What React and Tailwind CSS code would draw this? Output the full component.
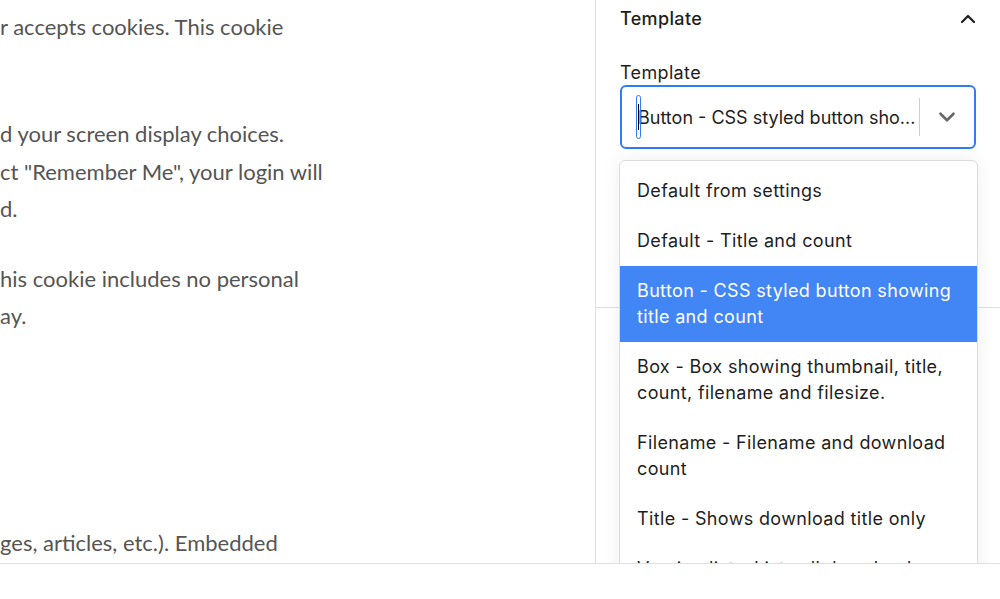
import { ChevronUp, ChevronDown } from "lucide-react";

const paragraphs = [
  { mt: "mt-0", lines: ["r accepts cookies. This cookie", ""] },
  {
    mt: "mt-[32px]",
    lines: ["d your screen display choices.", "ct \"Remember Me\", your login will", "d."],
  },
  { mt: "mt-[32px]", lines: ["his cookie includes no personal", "ay."] },
  { mt: "mt-[39px]", lines: ["", "", "", "", "ges, articles, etc.). Embedded"] },
];

const options = [
  "Default from settings",
  "Default - Title and count",
  "Button - CSS styled button showing title and count",
  "Box - Box showing thumbnail, title, count, filename and filesize.",
  "Filename - Filename and download count",
  "Title - Shows download title only",
  "Version list - Lists all downloads",
];

export default function App() {
  const active = 2;

  return (
    <div className="h-[599px] w-[1000px] flex flex-col bg-white overflow-hidden">
      <div className="h-[563px] flex">
        <div
          className="flex-1 pt-[8px] text-[22px] leading-[37.5px] text-[#555] overflow-hidden"
          style={{ fontFamily: "Lato, 'Open Sans', sans-serif" }}
        >
          {paragraphs.map((p, i) => (
            <div key={i} className={p.mt}>
              {p.lines.map((l, j) => (
                <div key={j} className="h-[37.5px] whitespace-nowrap">
                  {l}
                </div>
              ))}
            </div>
          ))}
        </div>

        <aside
          className="relative w-[405px] border-l border-[#e0e0e0] text-[#1e1e1e] tracking-[0.35px]"
          style={{ fontFamily: "Inter, 'Noto Sans', sans-serif" }}
        >
          <div className="h-[308px] border-b border-[#e0e0e0] px-[24px]">
            <div className="h-[37px] flex items-center justify-between">
              <span className="text-[18px] font-medium">Template</span>
              <ChevronUp className="w-[24px] h-[24px] -mr-[4px]" strokeWidth={2.2} />
            </div>
            <div className="mt-[25px] text-[18px] leading-[22px]">Template</div>
            <div className="mt-[1px] h-[64px] flex items-center border-2 border-[#2f7cf6] rounded-[6px]">
              <div className="flex-1 flex items-center pl-[14px] pr-[2px] min-w-0">
                <span className="relative w-[5px] h-[44px] rounded-full border border-[#2f7cf6] shrink-0">
                  <span className="absolute left-[1px] top-[8px] w-[1px] h-[26px] bg-black" />
                </span>
                <span className="text-[18px] tracking-normal -ml-[3px] whitespace-nowrap">
                  Button - CSS styled button sho...
                </span>
              </div>
              <span className="w-px h-[38px] bg-[#cfcfcf] shrink-0" />
              <div className="w-[54px] shrink-0 flex justify-center">
                <ChevronDown className="w-[26px] h-[26px] text-[#666]" strokeWidth={2.4} />
              </div>
            </div>
          </div>

          <div className="absolute left-[23px] top-[160px] w-[359px] bg-white border border-[#dcdcdc] rounded-[6px] pt-[5px] shadow-[0_0_18px_rgba(0,0,0,0.07)] overflow-hidden h-[420px]">
            {options.map((o, i) => (
              <div
                key={o}
                className={`px-[17px] py-[12px] text-[18px] leading-[26px] ${
                  i === active ? "bg-[#4285f4] text-white" : "text-[#1e1e1e]"
                }`}
              >
                {o}
              </div>
            ))}
          </div>
        </aside>
      </div>
      <div className="relative z-10 flex-1 bg-white border-t border-[#e0e0e0]" />
    </div>
  );
}
